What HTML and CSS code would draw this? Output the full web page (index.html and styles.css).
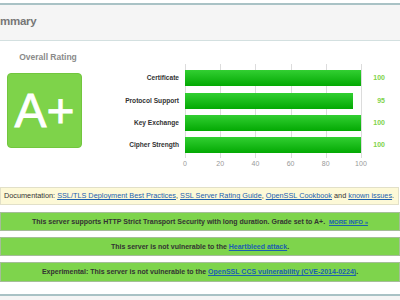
FILE: index.html
```html
<!DOCTYPE html>
<html lang="en">

<head>
    <meta charset="UTF-8">
    <title>SSL Report</title>
    <link rel="stylesheet" href="styles.css">
</head>

<body>
    <section class="report">
        <header class="report-head">
            <h1>Summary</h1>
        </header>

        <div class="rating">
            <div class="overall">
                <h2>Overall Rating</h2>
                <div class="grade">A+</div>
            </div>

            <div class="chart">
                <span class="label">Certificate</span>
                <div class="track"><div class="bar" style="width: 100%"></div></div>
                <span class="value">100</span>

                <span class="label">Protocol Support</span>
                <div class="track"><div class="bar" style="width: 95%"></div></div>
                <span class="value">95</span>

                <span class="label">Key Exchange</span>
                <div class="track"><div class="bar" style="width: 100%"></div></div>
                <span class="value">100</span>

                <span class="label">Cipher Strength</span>
                <div class="track"><div class="bar" style="width: 100%"></div></div>
                <span class="value">100</span>

                <div class="track tail"></div>
                <div class="axis">
                    <span>0</span><span>20</span><span>40</span><span>60</span><span>80</span><span>100</span>
                </div>
            </div>
        </div>

        <div class="info-box">
            Documentation: <a href="#">SSL/TLS Deployment Best Practices</a>, <a href="#">SSL Server Rating Guide</a>, <a href="#">OpenSSL Cookbook</a> and <a href="#">known issues</a>.
        </div>
        <div class="good-box">
            This server supports HTTP Strict Transport Security with long duration. Grade set to A+. &nbsp;<a class="more" href="#">MORE INFO &raquo;</a>
        </div>
        <div class="good-box">
            This server is not vulnerable to the <a href="#">Heartbleed attack</a>.
        </div>
        <div class="good-box">
            Experimental: This server is not vulnerable to the <a href="#">OpenSSL CCS vulnerability (CVE-2014-0224)</a>.
        </div>
    </section>
    <div class="next-section"></div>
</body>

</html>
```

FILE: styles.css
```css
* {
    font-family: "Liberation Sans", Arial, sans-serif;
    box-sizing: border-box;
}

body {
    background-color: #fff;
    margin: 0;
    padding-top: 3px;
    overflow: hidden;
}

.report-head {
    background-color: #f5f5f5;
    border-top: 2px solid #a9c2c5;
    border-bottom: 1px solid #d3e0e0;
    height: 38px;
}

.report-head h1 {
    margin: 0 0 0 -14px;
    font-size: 11.5px;
    letter-spacing: -0.3px;
    line-height: 33px;
    color: #777;
}

.rating {
    display: flex;
    padding-top: 11px;
}

.overall {
    width: 89px;
    padding-left: 7px;
}

.overall h2 {
    margin: 0 0 10px;
    font-size: 8.5px;
    line-height: 11px;
    color: #8a8a8a;
    text-align: center;
}

.grade {
    width: 75px;
    height: 75px;
    background-color: #7ed34a;
    border: 1px solid #72c63e;
    border-radius: 4px;
    color: #fff;
    font-size: 48px;
    -webkit-text-stroke: 0.8px #fff;
    line-height: 73px;
    text-align: center;
}

.chart {
    margin-top: 12px;
    display: grid;
    grid-template-columns: 96px 177px 23px;
    grid-template-rows: repeat(4, 22.33px) 5px 12px;
    align-items: end;
}

.label {
    padding-right: 6px;
    text-align: right;
    font-size: 6.6px;
    font-weight: bold;
    line-height: 16px;
    color: #333;
}

.track {
    height: 100%;
    display: flex;
    align-items: flex-end;
    background: repeating-linear-gradient(to right, #dcdcdc 0 1px, transparent 1px 35.2px);
}

.track .bar {
    max-width: 176px;
    flex: none;
    height: 16px;
    background: linear-gradient(#32cf32, #03a903);
}

.tail {
    grid-column: 2;
}

.value {
    text-align: right;
    font-size: 7px;
    font-weight: bold;
    line-height: 16px;
    color: #7ed34a;
}

.axis {
    grid-column: 2;
    display: flex;
    justify-content: space-between;
    padding-right: 1px;
    height: 12px;
}

.axis span {
    width: 0;
    display: flex;
    justify-content: center;
    font-size: 7px;
    line-height: 12px;
    color: #999;
}

.info-box {
    margin: 17px 1px 0 0;
    height: 18px;
    background-color: #fdf9d7;
    border: 1px solid #e2e0c8;
    padding-left: 3px;
    font-size: 7.3px;
    line-height: 16px;
    color: #333;
    white-space: nowrap;
}

.good-box {
    margin-top: 6px;
    height: 19px;
    background-color: #7ed44c;
    border: 1px solid #a5bd98;
    text-align: center;
    font-size: 7px;
    font-weight: bold;
    line-height: 17px;
    color: #333;
    white-space: nowrap;
}

.info-box+.good-box {
    margin-top: 7px;
}

.good-box:last-child {
    height: 20px;
    line-height: 18px;
}

a {
    color: #1c5fb0;
}

.more {
    font-size: 6px;
}

.next-section {
    margin-top: 12px;
    height: 10px;
    border-top: 2px solid #a9c2c5;
    background-color: #f5f5f5;
}
```
